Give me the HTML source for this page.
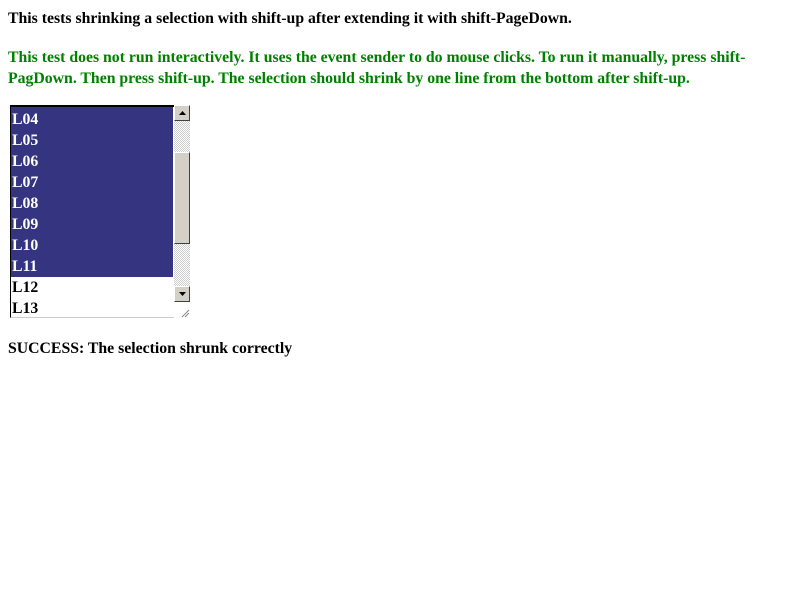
<html><head><style>
body{margin:0;background:#fff;font-family:"Liberation Serif",serif;font-weight:bold;font-size:15.78px}
.p{position:absolute;left:8px;margin:0}
.lb{position:absolute;left:10px;top:105px;width:164px;height:213px;border-left:1px solid #000;border-top:2px solid #000;border-bottom:1px solid #ccc;overflow:hidden;box-sizing:border-box}
.r{height:21px;line-height:22px;padding-left:1px;width:161px}
.s{background:#343480;color:#fff}
.sb{position:absolute;left:174px;top:105px;width:16px;height:197px;background:repeating-conic-gradient(#ccc 0 25%,#fff 0 50%) 0 0/2px 2px}
.bt{position:absolute;left:0;width:16px;height:16px;background:#d4d0c8;box-sizing:border-box;border:1px solid;border-color:#fff #404040 #404040 #fff}
</style></head><body>
<p class="p" style="top:10px">This tests shrinking a selection with shift-up after extending it with shift-PageDown.</p>
<p class="p" style="top:47px;color:#008000;width:770px;line-height:21px">This test does not run interactively. It uses the event sender to do mouse clicks. To run it manually, press shift-PagDown. Then press shift-up. The selection should shrink by one line from the bottom after shift-up.</p>
<div class="lb"><div style="margin-top:-19px">
<div class="r s">L03</div><div class="r s">L04</div><div class="r s">L05</div><div class="r s">L06</div><div class="r s">L07</div><div class="r s">L08</div><div class="r s">L09</div><div class="r s">L10</div><div class="r s">L11</div><div class="r">L12</div><div class="r">L13</div></div></div>
<div class="sb">
<div class="bt" style="top:0"><svg width="14" height="14" style="position:absolute;left:0;top:0"><path d="M4 9h7L7.5 5z" fill="#000"/></svg></div>
<div class="bt" style="top:47px;height:92px"></div>
<div class="bt" style="top:181px"><svg width="14" height="14" style="position:absolute;left:0;top:0"><path d="M4 5h7L7.5 9z" fill="#000"/></svg></div>
</div>
<svg style="position:absolute;left:180px;top:308px" width="10" height="10"><path d="M2 9L9 2M5 9L9 5" stroke="#888"/></svg>
<p class="p" style="top:340px">SUCCESS: The selection shrunk correctly</p>
</body></html>
